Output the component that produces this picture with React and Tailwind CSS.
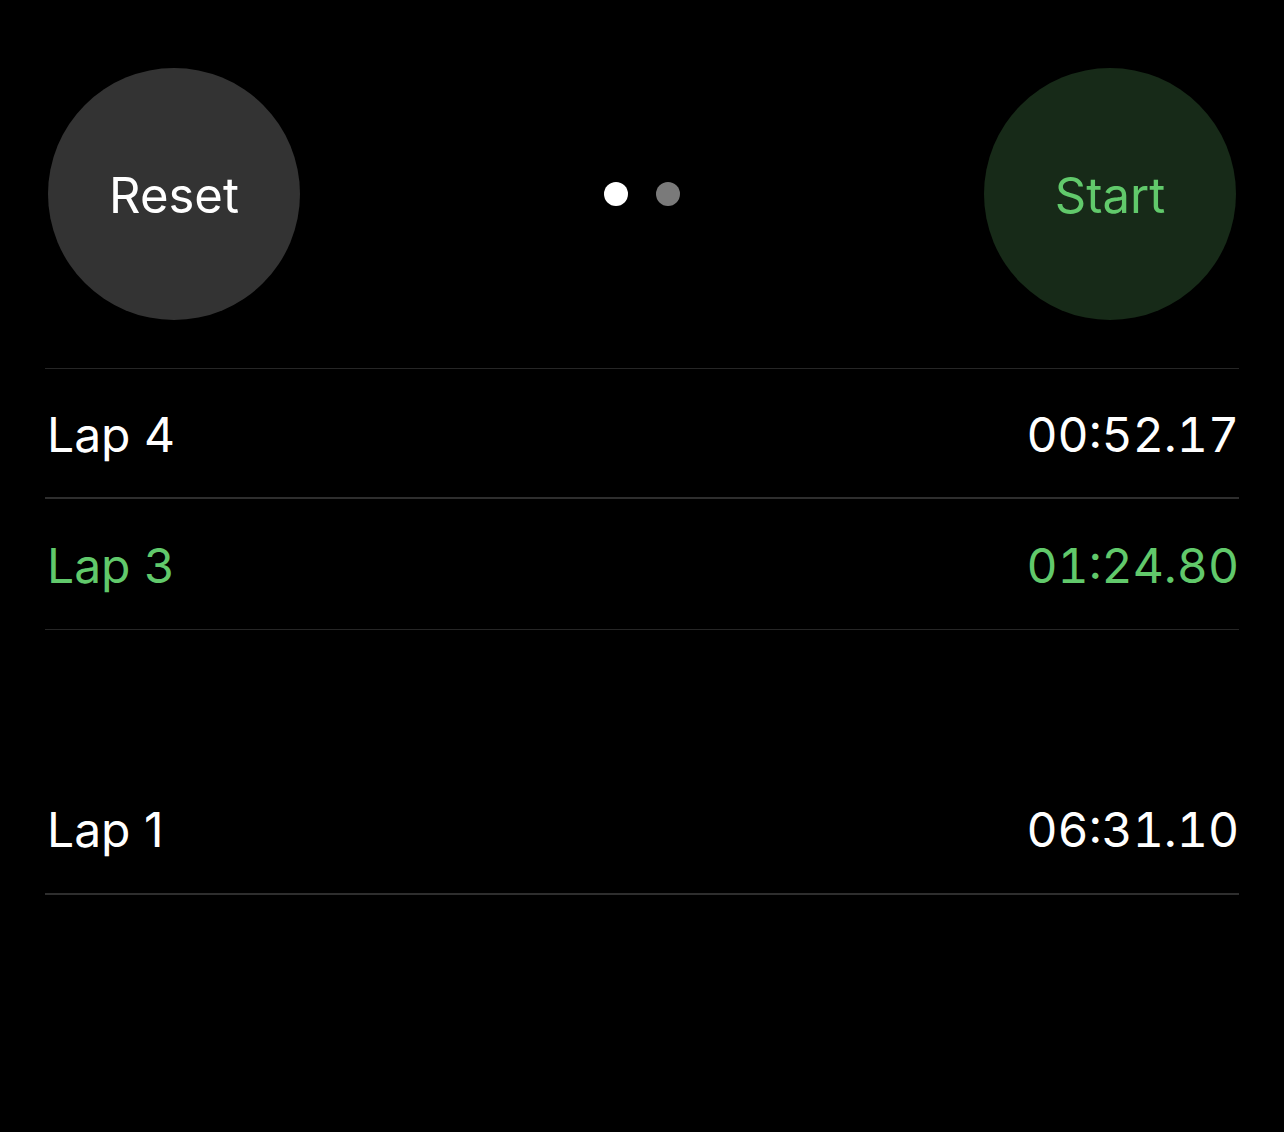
import React from 'react';

const laps = [
  { label: 'Lap 4', time: '00:52.17', color: 'text-white', row: 'h-[130px] border-b-2 border-[#2e2e2e]' },
  { label: 'Lap 3', time: '01:24.80', color: 'text-[#61c96b]', row: 'h-[131px] border-b border-[#262626]' },
  { label: '', time: '', color: 'text-white', row: 'h-[133px]' },
  { label: 'Lap 1', time: '06:31.10', color: 'text-white', row: 'h-[132px] border-b-2 border-[#2e2e2e]' },
];

export default function App() {
  return (
    <div
      className="min-h-[1132px] w-[1284px] bg-black"
      style={{ fontFamily: 'Inter, "Noto Sans", sans-serif' }}
    >
      <div className="flex items-center justify-between pl-[48px] pr-[48px] pt-[68px]">
        <button className="flex h-[252px] w-[252px] items-center justify-center rounded-full bg-[#333333] pt-[3px] text-[49px] text-white">
          Reset
        </button>
        <div className="flex items-center gap-[28px]">
          <span className="h-[24px] w-[24px] rounded-full bg-white" />
          <span className="h-[24px] w-[24px] rounded-full bg-[#7a7a7a]" />
        </div>
        <button className="flex h-[252px] w-[252px] items-center justify-center rounded-full bg-[#172a18] pt-[3px] text-[49px] text-[#61c96b]">
          Start
        </button>
      </div>

      <div className="mx-[45px] mt-[48px] border-t border-[#262626]">
        {laps.map((lap, i) => (
          <div
            key={i}
            className={`flex items-center justify-between pt-[3px] ${lap.row} ${lap.color}`}
          >
            <span className="pl-[2px] text-[48px]">{lap.label}</span>
            <span className="text-[48px] tabular-nums">{lap.time}</span>
          </div>
        ))}
      </div>
    </div>
  );
}
